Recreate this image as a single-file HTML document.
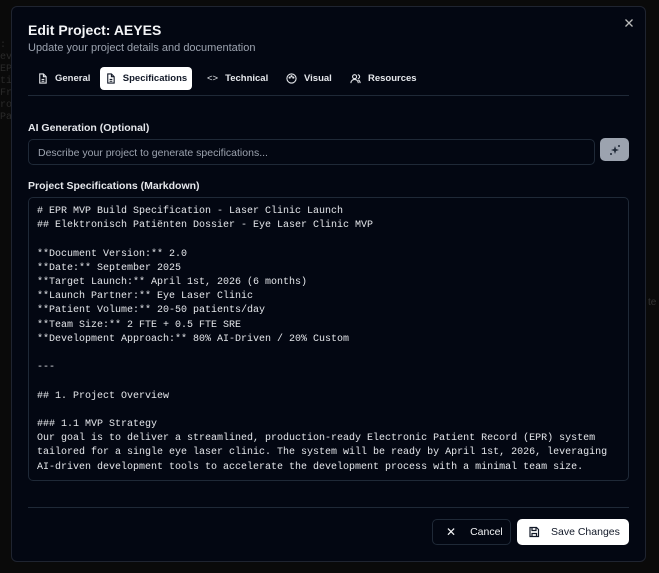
<!DOCTYPE html>
<html><head><meta charset="utf-8"><style>
*{box-sizing:border-box;margin:0;padding:0}
body{width:659px;height:573px;background:#0a0a0a;font-family:"Liberation Sans",sans-serif;position:relative;overflow:hidden}
.bgtxt{position:absolute;left:0;top:40px;font-family:"Liberation Mono",monospace;font-size:10px;line-height:12px;color:#2a2a2a}
.dlg{position:absolute;left:11px;top:6px;width:635px;height:556px;background:#030712;border:1px solid #1f2430;border-radius:6px}
.abs{position:absolute}
h1{position:absolute;left:16px;top:15px;font-size:14px;font-weight:bold;color:#f3f4f6}
.sub{left:16px;top:35px;font-size:11px;color:#9ca3af}
.tabs{left:16px;top:60px;height:23px;width:601px}
.tab{position:absolute;top:0;height:23px;font-size:9.5px;font-weight:bold;color:#e5e7eb;display:flex;align-items:center;gap:7px;padding:0 9px;white-space:nowrap}
.tab.act{background:#fff;color:#111827;border-radius:4px;width:92px;justify-content:center;padding:0}
.sep{left:16px;width:601px;height:1px;background:#1f2937}
.lbl{font-size:10.5px;font-weight:bold;color:#e5e7eb}
.inp{left:16px;top:132px;width:567px;height:26px;border:1px solid #1f2937;border-radius:5px;font-size:10.5px;color:#9ca3af;padding:7px 9px}
.ta{left:16px;top:190px;width:601px;height:284px;border:1px solid #1f2937;border-radius:5px;padding:7px 8px;font-family:"Liberation Mono",monospace;font-size:10px;line-height:14.2px;color:#e5e7eb;white-space:pre;overflow:hidden}
.btn{position:absolute;top:512px;height:26px;border-radius:5px;font-size:10.5px;display:flex;align-items:center}
</style></head><body>
<div class="bgtxt">: (<br>ev<br>EP<br>ti<br>Fr<br>ro<br>Pat</div>
<div class="abs" style="left:648px;top:297px;font-size:10px;color:#333">te</div>
<div class="dlg">
<h1>Edit Project: AEYES</h1>
<div class="abs sub">Update your project details and documentation</div>
<svg class="abs" style="left:612px;top:11px" width="10" height="10" viewBox="0 0 10 10"><path d="M1.5 1.5l7 7M8.5 1.5l-7 7" stroke="#bbb" stroke-width="1.3"/></svg>
<div class="abs tabs">
<div class="tab" style="left:0"><svg width="11" height="11" viewBox="0 0 12 12" fill="none" stroke="currentColor" stroke-width="1.2"><path d="M3 1h4l3 3v7H3z M7 1v3h3 M5 7h3 M5 9h3"/></svg>General</div>
<div class="tab act" style="left:72px"><svg width="11" height="11" viewBox="0 0 12 12" fill="none" stroke="#111827" stroke-width="1.2"><path d="M3 1h4l3 3v7H3z M7 1v3h3 M5 7h3 M5 9h3"/></svg>Specifications</div>
<div class="tab" style="left:170px"><span style="font-weight:normal">&lt;&gt;</span>Technical</div>
<div class="tab" style="left:249px"><svg width="11" height="11" viewBox="0 0 12 12" fill="none" stroke="currentColor" stroke-width="1.2"><circle cx="6" cy="6" r="5"/><circle cx="4" cy="5" r=".6"/><circle cx="6" cy="3.5" r=".6"/><circle cx="8" cy="5" r=".6"/></svg>Visual</div>
<div class="tab" style="left:313px"><svg width="11" height="11" viewBox="0 0 12 12" fill="none" stroke="currentColor" stroke-width="1.2"><circle cx="5" cy="4" r="2.2"/><path d="M1 11c0-2.5 2-4 4-4s4 1.5 4 4 M8.5 2a2 2 0 010 4 M11 11c0-2-1-3-2-3.5"/></svg>Resources</div>
</div>
<div class="abs sep" style="top:88px"></div>
<div class="abs lbl" style="left:16px;top:115px">AI Generation (Optional)</div>
<div class="abs inp">Describe your project to generate specifications...</div>
<div class="abs" style="left:588px;top:131px;width:29px;height:23px;background:#9ca3af;border-radius:5px;display:flex;align-items:center;justify-content:center"><svg width="12" height="12" viewBox="0 0 12 12" fill="#1f2937"><path d="M6 2l1 3 3 1-3 1-1 3-1-3-3-1 3-1z"/><circle cx="10" cy="2" r="1"/><circle cx="2" cy="10" r="1"/></svg></div>
<div class="abs lbl" style="left:16px;top:173px">Project Specifications (Markdown)</div>
<div class="abs ta"># EPR MVP Build Specification - Laser Clinic Launch
## Elektronisch Patiënten Dossier - Eye Laser Clinic MVP

**Document Version:** 2.0
**Date:** September 2025
**Target Launch:** April 1st, 2026 (6 months)
**Launch Partner:** Eye Laser Clinic
**Patient Volume:** 20-50 patients/day
**Team Size:** 2 FTE + 0.5 FTE SRE
**Development Approach:** 80% AI-Driven / 20% Custom

---

## 1. Project Overview

### 1.1 MVP Strategy
Our goal is to deliver a streamlined, production-ready Electronic Patient Record (EPR) system
tailored for a single eye laser clinic. The system will be ready by April 1st, 2026, leveraging
AI-driven development tools to accelerate the development process with a minimal team size.</div>
<div class="abs sep" style="top:500px"></div>
<div class="btn" style="left:420px;width:79px;border:1px solid #1f2937;color:#f3f4f6;padding-left:13px"><span style="font-size:12px;margin-right:14px">✕</span>Cancel</div>
<div class="btn" style="left:505px;width:112px;background:#fff;color:#111827;padding-left:11px"><svg width="12" height="12" viewBox="0 0 12 12" fill="none" stroke="#111827" stroke-width="1.2" style="margin-right:11px"><path d="M2 1.5h6.5L10.5 3.5V10.5H2z M4 1.5v3h4v-3 M4 10.5V7.5h4.5v3"/></svg>Save Changes</div>
</div>
</body></html>
